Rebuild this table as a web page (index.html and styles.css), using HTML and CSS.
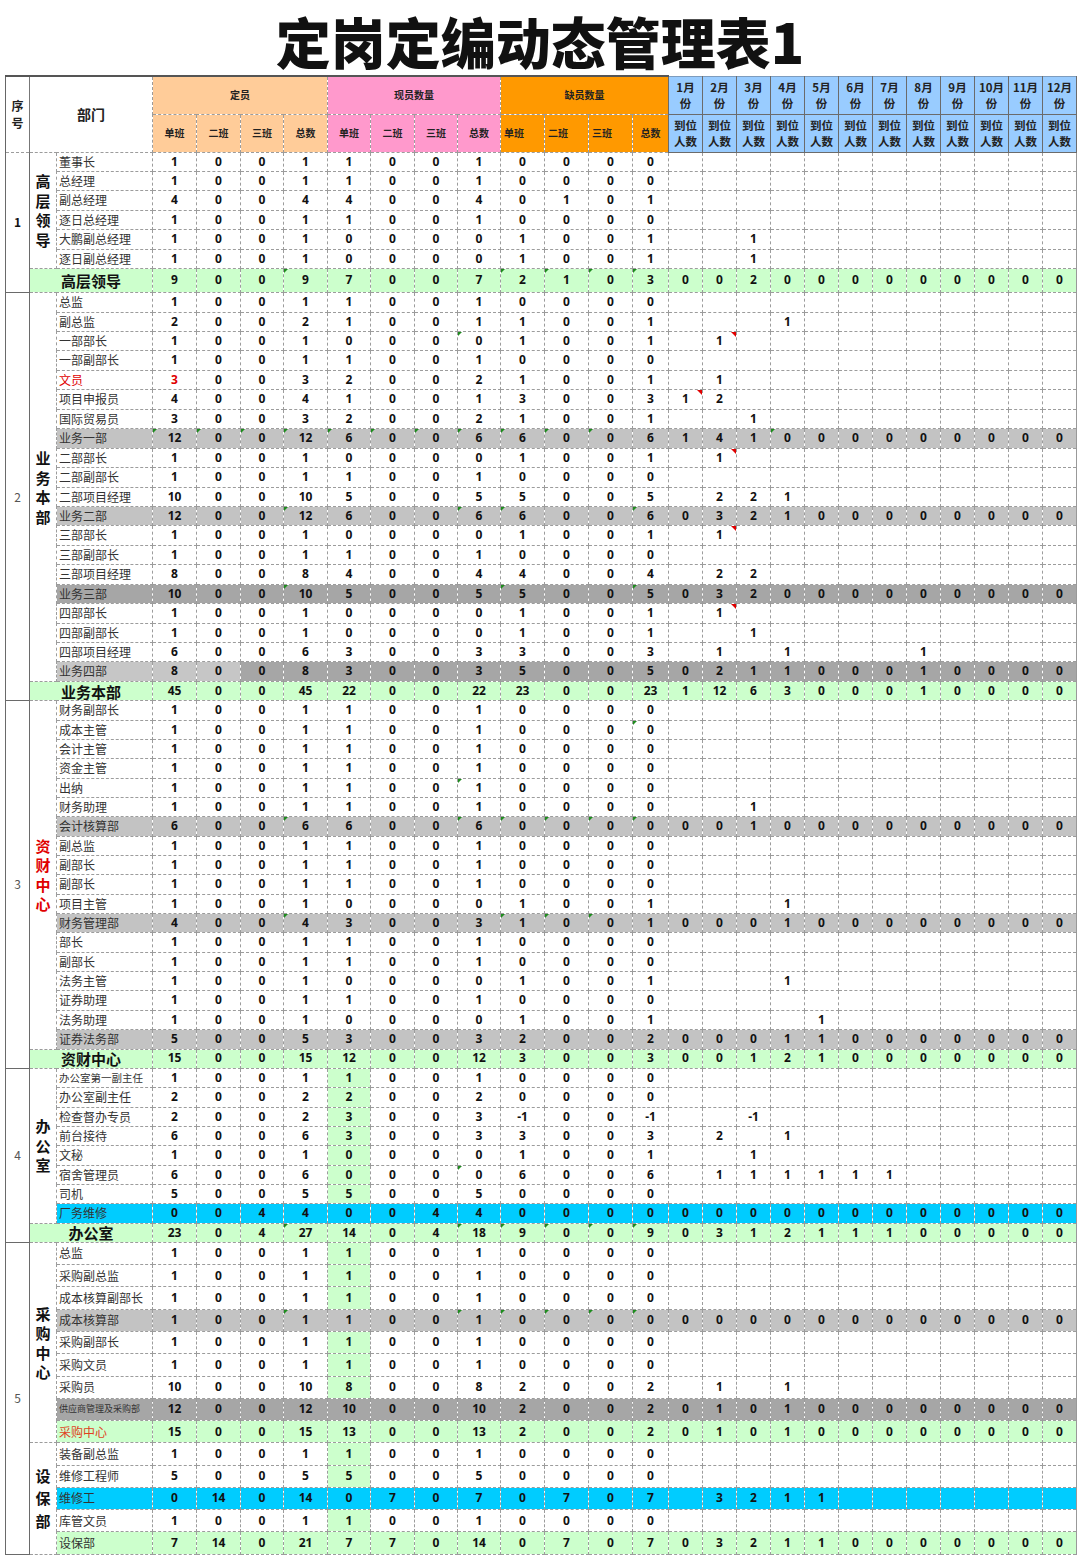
FILE: index.html
```html
<!DOCTYPE html>
<html lang="zh-CN">
<head>
<meta charset="utf-8">
<title>定岗定编动态管理表1</title>
<link rel="stylesheet" href="styles.css">
</head>
<body>
<h1 class="title">定岗定编动态管理表1</h1>
<table class="sheet">
<colgroup>
<col style="width:24px"><col style="width:27px"><col style="width:96px">
<col style="width:44px"><col style="width:44px"><col style="width:43px"><col style="width:44px">
<col style="width:43px"><col style="width:44px"><col style="width:43px"><col style="width:43px">
<col style="width:44px"><col style="width:44px"><col style="width:44px"><col style="width:36px">
<col style="width:34px"><col style="width:34px"><col style="width:34px"><col style="width:34px">
<col style="width:34px"><col style="width:34px"><col style="width:34px"><col style="width:34px">
<col style="width:34px"><col style="width:34px"><col style="width:34px"><col style="width:34px">
</colgroup>
<thead>
<tr>
<th class="hno" rowspan="2">序<br>号</th>
<th class="hdept" colspan="2" rowspan="2">部门</th>
<th class="h1" colspan="4">定员</th>
<th class="h2" colspan="4">现员数量</th>
<th class="h3" colspan="4">缺员数量</th>
<th class="hm">1月<br>份</th><th class="hm">2月<br>份</th><th class="hm">3月<br>份</th><th class="hm">4月<br>份</th>
<th class="hm">5月<br>份</th><th class="hm">6月<br>份</th><th class="hm">7月<br>份</th><th class="hm">8月<br>份</th>
<th class="hm">9月<br>份</th><th class="hm">10月<br>份</th><th class="hm">11月<br>份</th><th class="hm">12月<br>份</th>
</tr>
<tr>
<th class="h1">单班</th><th class="h1">二班</th><th class="h1">三班</th><th class="h1">总数</th>
<th class="h2">单班</th><th class="h2">二班</th><th class="h2">三班</th><th class="h2">总数</th>
<th class="h3 l">单班</th><th class="h3 l">二班</th><th class="h3 l">三班</th><th class="h3">总数</th>
<th class="hm">到位<br>人数</th><th class="hm">到位<br>人数</th><th class="hm">到位<br>人数</th><th class="hm">到位<br>人数</th>
<th class="hm">到位<br>人数</th><th class="hm">到位<br>人数</th><th class="hm">到位<br>人数</th><th class="hm">到位<br>人数</th>
<th class="hm">到位<br>人数</th><th class="hm">到位<br>人数</th><th class="hm">到位<br>人数</th><th class="hm">到位<br>人数</th>
</tr>
</thead>
<tbody id="tb"></tbody>
</table>
<script src="script.js"></script>
</body>
</html>
```
FILE: styles.css
```css
* { box-sizing: border-box; }
body {
  margin: 0;
  background: #fff;
  font-family: "Noto Sans CJK SC", "Noto Sans", sans-serif;
  color: #222;
}
.title {
  margin: 0;
  height: 75px;
  line-height: 80px;
  text-align: center;
  font-size: 55px;
  font-weight: 900;
  color: #111;
}
.sheet {
  margin-left: 5px;
  border-collapse: collapse;
  table-layout: fixed;
  width: 1071px;
}
.sheet td, .sheet th {
  border: 1px dashed #9c9c9c;
  padding: 0;
  text-align: center;
  vertical-align: middle;
  overflow: hidden;
  white-space: nowrap;
  line-height: 1.2;
}
thead tr { height: 38px; }
thead th {
  font-weight: bold;
  font-size: 10px;
  color: #222;
  border-color: #8a8a8a;
}
thead tr:first-child th { border-top: 2px solid #555; }
.sheet th.hno { font-size: 12px; line-height: 17px; border-left: 1px solid #666; border-right: 1px solid #777; }
.sheet th.hdept { font-size: 14px; }
.sheet th.h1 { background: #ffcc99; }
.sheet th.h2 { background: #ff99cc; }
.sheet th.h3 { background: #ff9900; }
.sheet th.h3.l { text-align: left; padding-left: 3px; }
.sheet th.hm {
  background: #99ccff;
  font-size: 11.5px;
  line-height: 16px;
  border: 1px solid #6b6b6b;
}
thead tr:first-child th.hm { border-top: 1px solid #7d9cbd; }

tr.r { height: 19.45px; }
tr.r3 { height: 19.35px; }
tr.r2 { height: 22.27px; }
tr.big { height: 24px; }

td.v {
  font-family: "Noto Sans", "Noto Sans CJK SC", sans-serif;
  font-weight: bold;
  font-size: 12px;
  color: #111;
}
td.c23 { border-right: 1px solid #999; }
td.pos {
  text-align: left;
  padding-left: 2px;
  font-size: 12px;
  color: #333;
}
td.no {
  font-size: 12px;
  color: #555;
  border-left: 1px solid #6a6a6a;
  border-right: 1px solid #6a6a6a;
  border-bottom: 1px solid #6a6a6a;
}
td.no.b { font-weight: bold; color: #111; }
td.dept {
  font-size: 15px;
  font-weight: bold;
  line-height: 19.5px;
  color: #111;
  border-left: 1px solid #6a6a6a;
}
td.dept.red { color: #e00000; }
td.dept.tall { line-height: 22.5px; }
td.sl {
  font-size: 15px;
  font-weight: bold;
  line-height: 1;
  color: #111;
  border-left: 1px solid #6a6a6a;
}

tr.sb td, tr.st td { background: #ccffcc; }
tr.gr td { background: #c3c3c3; }
tr.dk td, tr.mx td { background: #a6a6a6; }
tr.mx td.pos, tr.mx td.c0, tr.mx td.c1 { background: #c6c6c6; }
tr.cy td { background: #00ccff; }
tr.gc td.c4 { background: #ccffcc; }
tr.rl td.pos, tr.r0 td.c0 { color: #e00000; }
tr.st.rl td.pos { color: #e0421e; }
tr.s1 td.pos { font-size: 10.5px; }
tr.s2 td.pos { font-size: 9px; }

td.gm, td.rm { position: relative; }
td.gm::before {
  content: "";
  position: absolute;
  left: 0;
  top: 0;
  border-top: 4px solid #1e8c1e;
  border-right: 4px solid transparent;
}
td.rm::after {
  content: "";
  position: absolute;
  right: 0;
  top: 0;
  border-top: 5px solid #e00000;
  border-left: 5px solid transparent;
}
```
FILE: script.js
```js
var Z = '1 0 0 1 1 0 0 1 0 0 0 0';
var ZM = '0 0 0 0 0 0 0 0 0 0 0 0';
var D = [
 {no:'1', b:1, rh:'r', groups:[{dept:'高层领导', rows:[
  ['董事长', Z],
  ['总经理', Z],
  ['副总经理', '4 0 0 4 4 0 0 4 0 1 0 1'],
  ['逐日总经理', Z],
  ['大鹏副总经理', '1 0 0 1 0 0 0 0 1 0 0 1', '. . 1'],
  ['逐日副总经理', '1 0 0 1 0 0 0 0 1 0 0 1', '. . 1']
 ]}],
 sub:['高层领导', '9 0 0 9 7 0 0 7 2 1 0 3', '0 0 2 0 0 0 0 0 0 0 0 0', 'big', [3,8,9,10,11]]},
 {no:'2', rh:'r', groups:[{dept:'业务本部', rows:[
  ['总监', Z],
  ['副总监', '2 0 0 2 1 0 0 1 1 0 0 1', '. . . 1'],
  ['一部部长', '1 0 0 1 0 0 0 0 1 0 0 1', '. 1', '', [7], [13]],
  ['一部副部长', Z],
  ['文员', '3 0 0 3 2 0 0 2 1 0 0 1', '. 1', 'rl r0'],
  ['项目申报员', '4 0 0 4 1 0 0 1 3 0 0 3', '1 2', '', [], [12]],
  ['国际贸易员', '3 0 0 3 2 0 0 2 1 0 0 1', '. . 1'],
  ['业务一部', '12 0 0 12 6 0 0 6 6 0 0 6', '1 4 1 0 0 0 0 0 0 0 0 0', 'gr', [0,1,2,3,4,5,6,7,8,9,10,15]],
  ['二部部长', '1 0 0 1 0 0 0 0 1 0 0 1', '. 1', '', [], [13]],
  ['二部副部长', Z],
  ['二部项目经理', '10 0 0 10 5 0 0 5 5 0 0 5', '. 2 2 1'],
  ['业务二部', '12 0 0 12 6 0 0 6 6 0 0 6', '0 3 2 1 0 0 0 0 0 0 0 0', 'gr', [3,7,8,11]],
  ['三部部长', '1 0 0 1 0 0 0 0 1 0 0 1', '. 1', '', [], [13]],
  ['三部副部长', Z],
  ['三部项目经理', '8 0 0 8 4 0 0 4 4 0 0 4', '. 2 2'],
  ['业务三部', '10 0 0 10 5 0 0 5 5 0 0 5', '0 3 2 0 0 0 0 0 0 0 0 0', 'dk', [3,8,11]],
  ['四部部长', '1 0 0 1 0 0 0 0 1 0 0 1', '. 1', '', [], [13]],
  ['四部副部长', '1 0 0 1 0 0 0 0 1 0 0 1', '. . 1'],
  ['四部项目经理', '6 0 0 6 3 0 0 3 3 0 0 3', '. 1 . 1 . . . 1'],
  ['业务四部', '8 0 0 8 3 0 0 3 5 0 0 5', '0 2 1 1 0 0 0 1 0 0 0 0', 'mx']
 ]}],
 sub:['业务本部', '45 0 0 45 22 0 0 22 23 0 0 23', '1 12 6 3 0 0 0 1 0 0 0 0']},
 {no:'3', rh:'r3', groups:[{dept:'资财中心', red:1, rows:[
  ['财务副部长', Z],
  ['成本主管', Z, '', '', [11]],
  ['会计主管', Z],
  ['资金主管', Z],
  ['出纳', Z, '', '', [7]],
  ['财务助理', Z, '. . 1'],
  ['会计核算部', '6 0 0 6 6 0 0 6 0 0 0 0', '0 0 1 0 0 0 0 0 0 0 0 0', 'gr', [3,7,8,9,10,11]],
  ['副总监', Z],
  ['副部长', Z],
  ['副部长', Z],
  ['项目主管', '1 0 0 1 0 0 0 0 1 0 0 1', '. . . 1'],
  ['财务管理部', '4 0 0 4 3 0 0 3 1 0 0 1', '0 0 0 1 0 0 0 0 0 0 0 0', 'gr', [3,8,9,10]],
  ['部长', Z],
  ['副部长', Z],
  ['法务主管', '1 0 0 1 0 0 0 0 1 0 0 1', '. . . 1'],
  ['证券助理', Z],
  ['法务助理', '1 0 0 1 0 0 0 0 1 0 0 1', '. . . . 1'],
  ['证券法务部', '5 0 0 5 3 0 0 3 2 0 0 2', '0 0 0 1 1 0 0 0 0 0 0 0', 'gr']
 ]}],
 sub:['资财中心', '15 0 0 15 12 0 0 12 3 0 0 3', '0 0 1 2 1 0 0 0 0 0 0 0']},
 {no:'4', rh:'r3', groups:[{dept:'办公室', rows:[
  ['办公室第一副主任', Z, '', 'gc s1'],
  ['办公室副主任', '2 0 0 2 2 0 0 2 0 0 0 0', '', 'gc'],
  ['检查督办专员', '2 0 0 2 3 0 0 3 -1 0 0 -1', '. . -1', 'gc'],
  ['前台接待', '6 0 0 6 3 0 0 3 3 0 0 3', '. 2 . 1', 'gc'],
  ['文秘', '1 0 0 1 0 0 0 0 1 0 0 1', '. . 1', 'gc'],
  ['宿舍管理员', '6 0 0 6 0 0 0 0 6 0 0 6', '. 1 1 1 1 1 1', 'gc', [7]],
  ['司机', '5 0 0 5 5 0 0 5 0 0 0 0', '', 'gc'],
  ['厂务维修', '0 0 4 4 0 0 4 4 0 0 0 0', ZM, 'cy']
 ]}],
 sub:['办公室', '23 0 4 27 14 0 4 18 9 0 0 9', '0 3 1 2 1 1 1 0 0 0 0 0', '', [3,7,8,9,10,11]]},
 {no:'5', rh:'r2', groups:[
  {dept:'采购中心', rows:[
   ['总监', Z, '', 'gc'],
   ['采购副总监', Z, '', 'gc'],
   ['成本核算副部长', Z, '', 'gc'],
   ['成本核算部', Z, ZM, 'gr', [3,7,8,9,10,11]],
   ['采购副部长', Z, '', 'gc'],
   ['采购文员', Z, '', 'gc'],
   ['采购员', '10 0 0 10 8 0 0 8 2 0 0 2', '. 1 . 1', 'gc'],
   ['供应商管理及采购部', '12 0 0 12 10 0 0 10 2 0 0 2', '0 1 0 1 0 0 0 0 0 0 0 0', 'dk s2'],
   ['采购中心', '15 0 0 15 13 0 0 13 2 0 0 2', '0 1 0 1 0 0 0 0 0 0 0 0', 'st rl']
  ]},
  {dept:'设保部', tall:1, rows:[
   ['装备副总监', Z, '', 'gc'],
   ['维修工程师', '5 0 0 5 5 0 0 5 0 0 0 0', '', 'gc'],
   ['维修工', '0 14 0 14 0 7 0 7 0 7 0 7', '. 3 2 1 1', 'cy'],
   ['库管文员', Z, '', 'gc'],
   ['设保部', '7 14 0 21 7 7 0 14 0 7 0 7', '0 3 2 1 1 0 0 0 0 0 0 0', 'st']
  ]}
 ]}
];

function cells(nums, months, gm, rm) {
  var n = nums.split(' ');
  var m = months ? months.split(' ') : [];
  var s = '';
  for (var i = 0; i < 24; i++) {
    var v = i < 12 ? n[i] : (m[i - 12] || '');
    if (v === '.') v = '';
    var c = 'v c' + i + (i >= 12 ? ' mo' : '');
    if (gm && gm.indexOf(i) >= 0) c += ' gm';
    if (rm && rm.indexOf(i) >= 0) c += ' rm';
    s += '<td class="' + c + '">' + v + '</td>';
  }
  return s;
}

var html = '';
D.forEach(function (sec) {
  var total = sec.groups.reduce(function (a, g) { return a + g.rows.length; }, 0) + (sec.sub ? 1 : 0);
  var first = true;
  var rh = sec.rh + ' ';
  sec.groups.forEach(function (g) {
    g.rows.forEach(function (r, i) {
      var h = '<tr class="' + rh + (r[3] || '') + '">';
      if (first) {
        h += '<td class="no' + (sec.b ? ' b' : '') + '" rowspan="' + total + '">' + sec.no + '</td>';
        first = false;
      }
      if (i === 0) {
        h += '<td class="dept' + (g.red ? ' red' : '') + (g.tall ? ' tall' : '') + '" rowspan="' + g.rows.length + '">' + g.dept.split('').join('<br>') + '</td>';
      }
      h += '<td class="pos">' + r[0] + '</td>' + cells(r[1], r[2], r[4], r[5]);
      html += h + '</tr>';
    });
  });
  if (sec.sub) {
    var s = sec.sub;
    html += '<tr class="' + rh + 'sb ' + (s[3] || '') + '"><td class="sl" colspan="2">' + s[0] + '</td>' + cells(s[1], s[2], s[4], s[5]) + '</tr>';
  }
});
document.getElementById('tb').innerHTML = html;
```
